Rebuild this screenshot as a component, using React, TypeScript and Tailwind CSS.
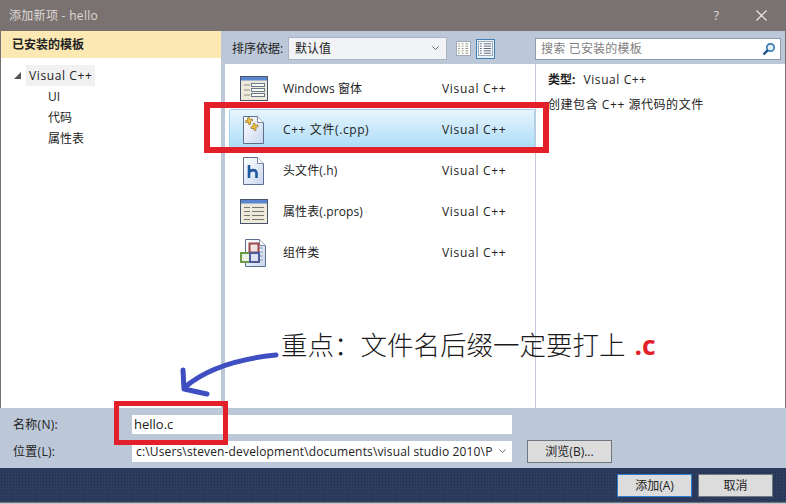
const items = [
  { name: 'Windows 窗体', icon: 'form' },
  { name: 'C++ 文件(.cpp)', icon: 'cpp', selected: true },
  { name: '头文件(.h)', icon: 'h' },
  { name: '属性表(.props)', icon: 'props' },
  { name: '组件类', icon: 'comp' },
]

function PageShape() {
  return (
    <>
      <path d="M1.5 1.5H15.5L21.5 7.5V28.5H1.5Z" fill="url(#pageFill)" stroke="#5d6f8c" />
      <path d="M15.5 1.5V7.5H21.5" fill="#fff" stroke="#7c8ba3" />
    </>
  )
}

function PageDefs() {
  return (
    <defs>
      <linearGradient id="pageFill" x1="0" y1="0" x2="1" y2="1">
        <stop offset="0" stopColor="#ffffff" />
        <stop offset="1" stopColor="#c9d6f0" />
      </linearGradient>
    </defs>
  )
}

function ItemIcon({ kind }: { kind: string }) {
  if (kind === 'form' || kind === 'props') {
    return (
      <svg width="28" height="26" viewBox="0 0 28 26">
        <rect x="0.5" y="0.5" width="27" height="24" fill="#eeeadb" stroke="#49546a" />
        <rect x="1" y="1" width="26" height="3.5" fill="#5a86cf" />
        {kind === 'form' ? (
          <g fill="#f8f8f4" stroke="#6c7a8e">
            <rect x="11.5" y="7.5" width="13" height="3" />
            <rect x="11.5" y="12.5" width="13" height="3" />
            <rect x="11.5" y="17.5" width="13" height="3" />
            <path d="M4 9H10M4 14H10M4 19H10" fill="none" stroke="#8b8f86" />
          </g>
        ) : (
          <path d="M4 8.5H10M12 8.5H24M4 12.5H10M12 12.5H24M4 16.5H10M12 16.5H24M4 20.5H10M12 20.5H24" stroke="#77786e" />
        )}
      </svg>
    )
  }
  if (kind === 'cpp') {
    return (
      <svg width="23" height="30" viewBox="0 0 23 30">
        <PageDefs />
        <PageShape />
        <g fill="none" strokeLinecap="round">
          <path d="M4.5 6.5L9.5 5M6.5 3.5L7.5 8.5M10 12.5L15 11M12 9.5L13 14.5" stroke="#8a6d22" strokeWidth="2.8" />
          <path d="M4.5 6.5L9.5 5M6.5 3.5L7.5 8.5M10 12.5L15 11M12 9.5L13 14.5" stroke="#eec045" strokeWidth="1.6" />
        </g>
      </svg>
    )
  }
  if (kind === 'h') {
    return (
      <svg width="23" height="30" viewBox="0 0 23 30">
        <PageDefs />
        <PageShape />
        <path d="M7 9V22M7 16.5C8.5 13.5 14.5 13 14.5 17V22" fill="none" stroke="#1d5a9e" strokeWidth="2.6" />
      </svg>
    )
  }
  return (
    <svg width="28" height="30" viewBox="0 0 28 30">
      <PageDefs />
      <g transform="translate(4 0)">
        <PageShape />
        <path d="M12 10H19M12 14H19M12 18H19M12 22H19" stroke="#8c96ad" />
      </g>
      <rect x="9.5" y="5.5" width="9" height="9" fill="#f1e4e2" stroke="#9b4a4a" strokeWidth="2" />
      <rect x="1" y="15" width="9" height="9" fill="#edf3e4" stroke="#6d9a46" strokeWidth="2" />
      <rect x="10" y="15" width="9" height="9" fill="#dfe2f3" stroke="#4e5b9a" strokeWidth="2" />
    </svg>
  )
}

function ViewIcon({ selected }: { selected?: boolean }) {
  return (
    <div className={selected ? 'flex h-[20px] w-[19px] items-center justify-center border border-[#3f7fb5] bg-[#e6f1f8]' : 'flex h-[20px] w-[16px] items-center justify-center'}>
      <svg width="15" height="15" viewBox="0 0 16 16">
        <rect x="0.5" y="0.5" width="15" height="15" fill="#fff" stroke="#9aa5b5" />
        {selected ? (
          <path d="M2 3H4M6 3H14M2 5.5H4M6 5.5H14M2 8H4M6 8H14M2 10.5H4M6 10.5H14M2 13H4M6 13H14" stroke="#51617a" />
        ) : (
          <path d="M2 3H4M6 3H8M10 3H13M2 5.5H4M6 5.5H8M10 5.5H13M2 8H4M6 8H8M10 8H13M2 10.5H4M6 10.5H8M10 10.5H13M2 13H4M6 13H8M10 13H13" stroke="#8c8f7a" />
        )}
      </svg>
    </div>
  )
}

function Chevron() {
  return (
    <svg width="7" height="5" viewBox="0 0 7 5">
      <path d="M0.5 0.5L3.5 3.5L6.5 0.5" fill="none" stroke="#666" />
    </svg>
  )
}

export default function App() {
  return (
    <div className="relative flex h-[504px] w-[786px] flex-col overflow-hidden bg-[#bcc7d8] font-['Open_Sans','Noto_Sans_CJK_SC',sans-serif] text-[12px] text-[#222]">
      {/* title bar */}
      <div className="flex h-[31px] items-center justify-between bg-[#7a7270] pl-[9px] pr-[19px] text-[#ded9d7]">
        <span className="text-[12px] tracking-[0.3px]">添加新项 - hello</span>
        <div className="flex items-center gap-[37px]">
          <span className="text-[13px]">?</span>
          <svg width="11" height="11" viewBox="0 0 11 11">
            <path d="M0.5 0.5L10.5 10.5M10.5 0.5L0.5 10.5" stroke="#eee" strokeWidth="1.2" />
          </svg>
        </div>
      </div>

      <div className="flex h-[377px] border-l border-r border-[#7a7270]">
        {/* template tree */}
        <div className="w-[220px] shrink-0 bg-white">
          <div className="flex h-[27px] items-center bg-[#fce8b2] pl-[11px] font-bold">已安装的模板</div>
          <div className="pt-[7px]">
            <div className="flex h-[21px] items-center">
              <svg width="7" height="7" viewBox="0 0 7 7" className="ml-[13px]">
                <path d="M7 0V7H0Z" fill="#555" />
              </svg>
              <span className="ml-[5px] flex h-[21px] w-[69px] items-center bg-[#f1f1f1] pl-[3px] tracking-[0.6px]">Visual C++</span>
            </div>
            {['UI', '代码', '属性表'].map((t) => (
              <div key={t} className="flex h-[21px] items-center pl-[47px]">{t}</div>
            ))}
          </div>
        </div>

        <div className="flex min-w-0 flex-1 flex-col">
          {/* toolbar */}
          <div className="flex h-[33px] items-center pl-[11px] pr-[4px] pt-[2px]">
            <span className="w-[56px] shrink-0">排序依据:</span>
            <div className="flex h-[23px] w-[159px] items-center justify-between border border-[#a9b3c4] bg-[#f1f3f6] pl-[6px] pr-[7px]">
              <span>默认值</span>
              <Chevron />
            </div>
            <div className="ml-[8px] flex items-center gap-[5px]">
              <ViewIcon />
              <ViewIcon selected />
            </div>
            <div className="ml-[40px] flex h-[22px] flex-1 items-center justify-between border border-[#8f9bb0] bg-white pl-[5px] pr-[4px] text-[#7f7f7f]">
              <span className="tracking-[0.2px]">搜索 已安装的模板</span>
              <svg width="14" height="14" viewBox="0 0 14 14">
                <circle cx="8.5" cy="5.5" r="3.7" fill="#e4f0fa" stroke="#3b7ab5" strokeWidth="1.7" />
                <path d="M5.8 8.2L1.5 12.5" stroke="#1f4f8a" strokeWidth="2.4" />
              </svg>
            </div>
          </div>

          <div className="flex min-h-0 flex-1">
            {/* item list */}
            <div className="ml-[4px] w-[311px] shrink-0 border-r border-[#c2cad8] bg-white pl-[4px] pt-[4px]">
              {items.map((item) => (
                <div
                  key={item.name}
                  className={
                    item.selected
                      ? 'flex h-[41px] items-center rounded-[2px] border border-[#a5d2ee] bg-gradient-to-b from-[#e8f5fd] to-[#a9dcf8]'
                      : 'flex h-[41px] items-center border border-transparent'
                  }
                >
                  <div className="mr-[6px] flex w-[47px] shrink-0 justify-center">
                    <ItemIcon kind={item.icon} />
                  </div>
                  <span className={item.selected ? 'w-[159px] shrink-0 tracking-[0.6px]' : 'w-[159px] shrink-0 tracking-[0.1px]'}>{item.name}</span>
                  <span className="tracking-[0.7px]">Visual C++</span>
                </div>
              ))}
            </div>

            {/* details */}
            <div className="min-w-0 flex-1 bg-white pl-[12px] pt-[7px]">
              <div className="flex h-[18px] items-center">
                <span className="font-bold">类型:</span>
                <span className="ml-[8px] tracking-[0.6px]">Visual C++</span>
              </div>
              <div className="mt-[7px] flex h-[18px] items-center tracking-[0.55px]">创建包含 C++ 源代码的文件</div>
            </div>
          </div>
        </div>
      </div>

      {/* name and location */}
      <div className="flex h-[60px] flex-col pl-[13px] pt-[7px]">
        <div className="flex h-[19px] items-center">
          <span className="w-[119px] shrink-0 tracking-[0.3px]">名称(N):</span>
          <div className="flex h-[19px] w-[380px] items-center bg-white pl-[2px] text-[13px]">hello.c</div>
        </div>
        <div className="mt-[6px] flex h-[23px] items-center">
          <span className="w-[119px] shrink-0 tracking-[0.3px]">位置(L):</span>
          <div className="flex h-[21px] w-[380px] items-center justify-between bg-white pl-[4px] pr-[6px]">
            <span className="w-[357px] overflow-hidden whitespace-nowrap tracking-[0.15px]">c:\Users\steven-development\documents\visual studio 2010\Projects</span>
            <Chevron />
          </div>
          <button className="ml-[15px] h-[23px] w-[85px] border border-[#6f7680] bg-[#dcdcdc]">浏览(B)...</button>
        </div>
      </div>

      {/* footer */}
      <div className="flex h-[35px] items-start justify-end gap-[6px] border-b border-[#7a7270] bg-[#2c3c5e] bg-[radial-gradient(#1f2d4b_1px,transparent_1px)] bg-[length:3px_3px] pr-[13px] pt-[6px]">
        <button className="h-[23px] w-[75px] border border-[#2f7fd0] bg-[#dcdcdc]">添加(A)</button>
        <button className="h-[23px] w-[75px] border border-[#6f7680] bg-[#dcdcdc]">取消</button>
      </div>

      {/* annotations drawn over the dialog */}
      <div className="absolute left-[204px] top-[102px] h-[51px] w-[345px] border-[6px] border-[#e3202a]" />
      <div className="absolute left-[114px] top-[401px] h-[44px] w-[114px] border-[5px] border-[#e3202a]" />
      <svg className="absolute left-[176px] top-[350px]" width="106" height="50" viewBox="0 0 106 50">
        <path d="M100 5C70 8 35 15 9 37M7 20L8 39L31 44" fill="none" stroke="#3f4ec0" strokeWidth="5" strokeLinecap="round" strokeLinejoin="round" />
      </svg>
      <div className="absolute left-[281px] top-[326px] flex items-baseline whitespace-nowrap text-[26.5px] font-light leading-[38px] text-[#1a1a1a]">
        <span>{'重点\uFF1A文件名后缀一定要打上'}</span>
        <span className="ml-[9px] font-bold text-[#e3202a]">.c</span>
      </div>
    </div>
  )
}
